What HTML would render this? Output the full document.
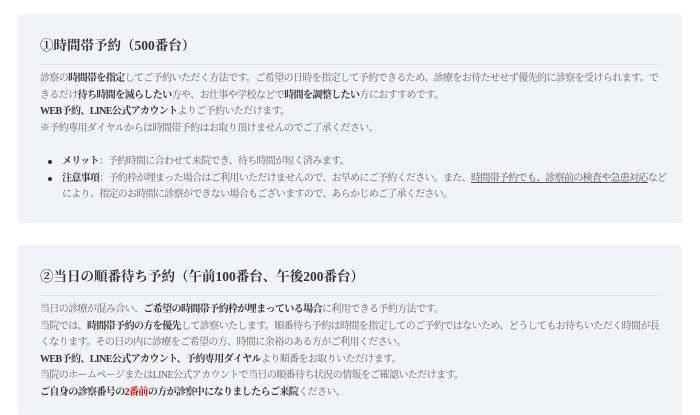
<!DOCTYPE html>
<html><head><meta charset="utf-8"><style>
body{margin:0;background:#fff;width:700px;height:400px;overflow:hidden;font-family:"Liberation Serif","Noto Serif CJK SC",serif;}
.box{position:absolute;left:18px;width:664px;background:#f0f3f7;border-radius:3px;}
.in{padding:0 22px;}
h2{margin:0;font-size:13.5px;font-weight:bold;color:#333;line-height:20px;padding-bottom:8px;border-bottom:1px solid #dde1e6;}
p{margin:0;font-size:10px;line-height:16.6px;color:#666;letter-spacing:-0.6px}
b{color:#333}
ul{margin:0;padding:0 0 0 22px;font-size:10px;line-height:16.6px;color:#666;letter-spacing:-0.7px}
li{list-style:none;position:relative}
li:before{content:"";position:absolute;left:-14px;top:6px;width:4px;height:4px;border-radius:50%;background:#333}
u{text-decoration:underline;color:#555}
.r{color:#e00}
.nw{white-space:nowrap}
</style></head><body>
<div class="box" style="top:14px;height:209px"><div class="in" style="padding-top:22px">
<h2>①時間帯予約（500番台）</h2>
<p style="margin-top:6px">診察の<b>時間帯を指定</b>してご予約いただく方法です。ご希望の日時を指定して予約できるため、診療をお待たせせず優先的に診察を受けられます。できるだけ<b>待ち時間を減らしたい</b>方や、お仕事や学校などで<b>時間を調整したい</b>方におすすめです。<br><b>WEB予約、LINE公式アカウント</b>よりご予約いただけます。<br>※予約専用ダイヤルからは時間帯予約はお取り頂けませんのでご了承ください。</p>
<ul style="margin-top:16.6px">
<li><b>メリット</b>：予約時間に合わせて来院でき、待ち時間が短く済みます。</li>
<li><span class="nw"><b>注意事項</b>：予約枠が埋まった場合はご利用いただけませんので、お早めにご予約ください。また、<u>時間帯予約でも、診察前の検査や急患対応</u>など</span><br>により、指定のお時間に診察ができない場合もございますので、あらかじめご了承ください。</li>
</ul>
</div></div>
<div class="box" style="top:245px;height:170px"><div class="in" style="padding-top:22px">
<h2>②当日の順番待ち予約（午前100番台、午後200番台）</h2>
<p style="margin-top:6px">当日の診療が混み合い、<b>ご希望の時間帯予約枠が埋まっている場合</b>に利用できる予約方法です。<br>当院では、<b>時間帯予約の方を優先</b>して診察いたします。順番待ち予約は時間を指定してのご予約ではないため、どうしてもお待ちいただく時間が長くなります。その日の内に診療をご希望の方、時間に余裕のある方がご利用ください。<br><b>WEB予約、LINE公式アカウント、予約専用ダイヤル</b>より順番をお取りいただけます。<br>当院のホームページまたはLINE公式アカウントで当日の順番待ち状況の情報をご確認いただけます。<br><b>ご自身の診察番号の<span class="r">2番前</span>の方が診察中になりましたらご来院</b>ください。</p>
</div></div>
</body></html>
